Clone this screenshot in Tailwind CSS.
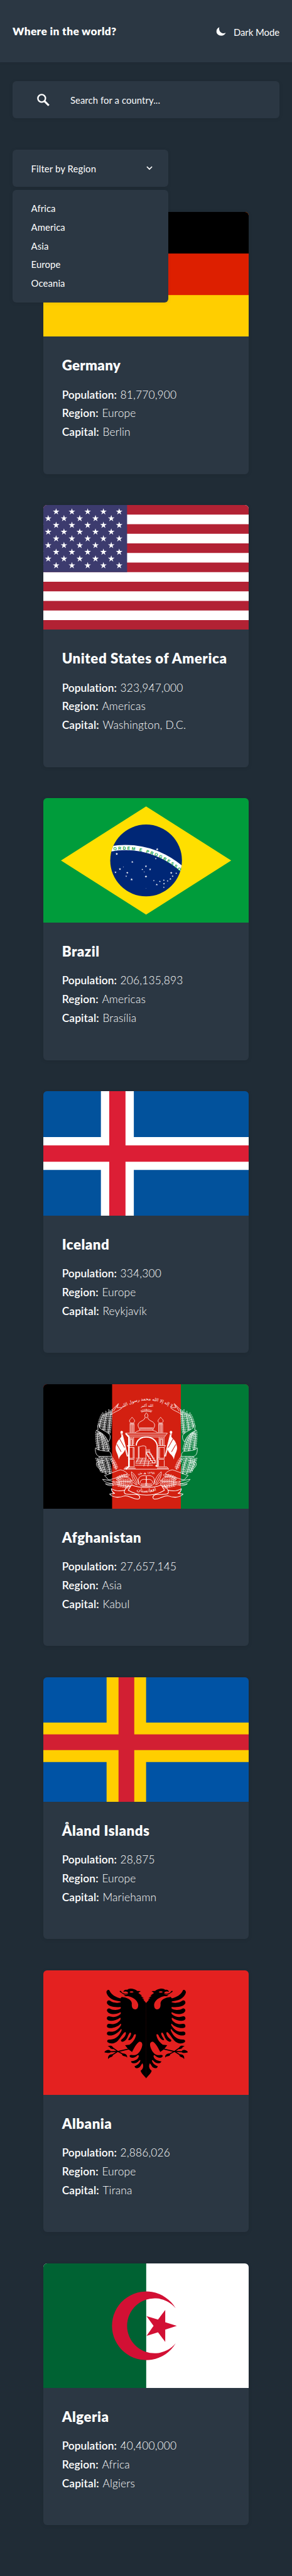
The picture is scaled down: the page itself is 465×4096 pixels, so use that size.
<!DOCTYPE html>
<html lang="en">
<head>
<meta charset="utf-8">
<title>Where in the world?</title>
<script src="https://cdn.jsdelivr.net/npm/@tailwindcss/browser@4"></script>
</head>
<body class="bg-[#202c36] font-['Lato','Open_Sans',sans-serif] text-white">
<div class="flex h-[4096px] w-[465px] flex-col overflow-hidden">

<header class="flex h-[99.1px] shrink-0 items-center justify-between bg-[#2b3743] px-[20px] shadow-[0_1px_5px_rgba(0,0,0,0.06)]">
  <h1 class="text-[17.35px] leading-[24px] font-extrabold tracking-[0.36px]">Where in the world?</h1>
  <div class="flex items-center gap-[12px] pt-[2px]">
    <svg class="mt-[-2px] h-[14px] w-[16px]" viewBox="0 0 26 23"><path d="M8.5 0.5C3.5 2.500 1 6.500 1 11.500C1 18 6.500 22.500 13.500 22.500C19 22.500 23.500 19.800 25.200 14.800C23 16.200 20.500 16.800 17.500 16.300C11 15.300 6.500 8.500 8.500 0.500Z" fill="#fff"/></svg>
    <span class="text-[14.87px] leading-[20px] tracking-[-0.04px]">Dark Mode</span>
  </div>
</header>

<main class="flex flex-col px-[19.8px] pt-[29.8px]">
  <div class="flex h-[59.5px] items-center rounded-[6px] bg-[#2b3743] pl-[39.7px] shadow-[0_1px_6px_rgba(0,0,0,0.08)]">
    <svg class="h-[20px] w-[20px]" viewBox="0 0 32 32" fill="none" stroke="#fff"><circle cx="11.800" cy="11.800" r="9.600" stroke-width="3.800"/><path d="M19 19L30 30" stroke-width="5"/></svg>
    <span class="ml-[32.400px] text-[14.87px] leading-[20px] tracking-[0.08px] text-gray-50">Search for a country...</span>
  </div>

  <div class="relative mt-[49.600px] w-[247.900px]">
    <div class="flex h-[59.5px] items-center justify-between rounded-[6px] bg-[#2b3743] pr-[25px] pl-[29.800px] shadow-[0_1px_6px_rgba(0,0,0,0.08)]">
      <span class="text-[14.87px] leading-[20px] tracking-[0.13px]">Filter by Region</span>
      <svg class="h-[7px] w-[10px]" viewBox="0 0 16 11" fill="none" stroke="#fff" stroke-width="2.800"><path d="M1.500 1.500L8 8L14.500 1.500"/></svg>
    </div>
    <ul class="absolute top-[64.400px] left-0 z-10 h-[178.500px] w-full rounded-[6px] bg-[#2b3743] py-[14.800px] pl-[29.800px] text-[14.87px] leading-[29.750px] tracking-[0.1px] shadow-[0_1px_6px_rgba(0,0,0,0.08)]">
      <li>Africa</li><li>America</li><li>Asia</li><li>Europe</li><li>Oceania</li>
    </ul>
  </div>

  <div class="mx-auto mt-[39.700px] flex w-[327.300px] flex-col gap-[49.580px]">

    <article class="h-[416.400px] overflow-hidden rounded-[6px] bg-[#2b3743] shadow-[0_1px_6px_rgba(0,0,0,0.09)]">
      <svg class="block h-[198.300px] w-full" viewBox="0 0 528 320" preserveAspectRatio="none">
        <rect width="528" height="320" fill="#ffce00"/><rect width="528" height="213.300" fill="#dd1f00"/><rect width="528" height="106.700" fill="#000"/>
      </svg>
      <div class="px-[29.800px] pt-[29.700px]">
        <h2 class="text-[22.300px] leading-[32px] font-extrabold tracking-[0.3px]">Germany</h2>
        <dl class="mt-[15.400px] text-[17.35px] leading-[29.750px] font-light tracking-[0.17px]">
          <div class="flex gap-[5.600px]"><dt class="font-semibold tracking-[0.02px]">Population:</dt><dd>81,770,900</dd></div>
          <div class="flex gap-[5.600px]"><dt class="font-semibold tracking-[0.15px]">Region:</dt><dd>Europe</dd></div>
          <div class="flex gap-[5.600px]"><dt class="font-semibold tracking-[0.15px]">Capital:</dt><dd>Berlin</dd></div>
        </dl>
      </div>
    </article>

    <article class="h-[416.400px] overflow-hidden rounded-[6px] bg-[#2b3743] shadow-[0_1px_6px_rgba(0,0,0,0.09)]">
      <svg class="block h-[198.300px] w-full" viewBox="0 0 528 320" preserveAspectRatio="none">
        <defs><path id="star" d="M0-1L.2245-.309L.951-.309L.3633.118L.5878.809L0 .382L-.5878.809L-.3633.118L-.951-.309L-.2245-.309Z"/></defs>
        <rect width="528" height="320" fill="#fff"/>
        <path fill="#b22234" d="M0 0h528v24.600H0zM0 49.200h528v24.600H0zM0 98.500h528v24.600H0zM0 147.700h528v24.600H0zM0 196.900h528v24.600H0zM0 246.200h528v24.600H0zM0 295.400h528V320H0z"/>
        <rect width="215.200" height="172.300" fill="#3c3b6e"/>
        <g id="us-stars" fill="#fff"></g>
      </svg>
      <div class="px-[29.800px] pt-[29.700px]">
        <h2 class="text-[22.300px] leading-[32px] font-extrabold tracking-[0.57px] whitespace-nowrap">United States of America</h2>
        <dl class="mt-[15.400px] text-[17.35px] leading-[29.750px] font-light tracking-[0.17px]">
          <div class="flex gap-[5.600px]"><dt class="font-semibold tracking-[0.02px]">Population:</dt><dd>323,947,000</dd></div>
          <div class="flex gap-[5.600px]"><dt class="font-semibold tracking-[0.15px]">Region:</dt><dd>Americas</dd></div>
          <div class="flex gap-[5.600px]"><dt class="font-semibold tracking-[0.15px]">Capital:</dt><dd>Washington, D.C.</dd></div>
        </dl>
      </div>
    </article>

    <article class="h-[416.400px] overflow-hidden rounded-[6px] bg-[#2b3743] shadow-[0_1px_6px_rgba(0,0,0,0.09)]">
      <svg class="block h-[198.300px] w-full" viewBox="0 0 528 320" preserveAspectRatio="none">
        <defs><clipPath id="globe"><circle cx="264" cy="160" r="92.100"/></clipPath><path id="motto" d="M180.200 133.800A212.500 212.500 0 0 1 370 209"/></defs>
        <rect width="528" height="320" fill="#009c3b"/>
        <path d="M45.400 160L264 21.400L482.600 160L264 299Z" fill="#ffdf00"/>
        <circle cx="264" cy="160" r="92.100" fill="#002776"/>
        <circle cx="211.400" cy="344" r="217.100" fill="none" stroke="#fff" stroke-width="13.400" clip-path="url(#globe)"/>
        <text class="font-['Liberation_Sans',sans-serif] font-bold" font-size="11" fill="#009c3b"><textPath href="#motto" textLength="184">ORDEM E PROGRESSO</textPath></text>
        <g id="br-stars" fill="#fff"></g>
      </svg>
      <div class="px-[29.800px] pt-[29.700px]">
        <h2 class="text-[22.300px] leading-[32px] font-extrabold tracking-[0.5px]">Brazil</h2>
        <dl class="mt-[15.400px] text-[17.35px] leading-[29.750px] font-light tracking-[0.17px]">
          <div class="flex gap-[5.600px]"><dt class="font-semibold tracking-[0.02px]">Population:</dt><dd>206,135,893</dd></div>
          <div class="flex gap-[5.600px]"><dt class="font-semibold tracking-[0.15px]">Region:</dt><dd>Americas</dd></div>
          <div class="flex gap-[5.600px]"><dt class="font-semibold tracking-[0.15px]">Capital:</dt><dd>Brasília</dd></div>
        </dl>
      </div>
    </article>

    <article class="h-[416.400px] overflow-hidden rounded-[6px] bg-[#2b3743] shadow-[0_1px_6px_rgba(0,0,0,0.09)]">
      <svg class="block h-[198.300px] w-full" viewBox="0 0 528 320" preserveAspectRatio="none">
        <rect width="528" height="320" fill="#02529c"/>
        <path fill="#fff" d="M147.900 0h84.600v320h-84.600zM0 117.900h528v84.300H0z"/>
        <path fill="#dc1e35" d="M169.300 0h41.800v320h-41.800zM0 139.300h528v42H0z"/>
      </svg>
      <div class="px-[29.800px] pt-[29.700px]">
        <h2 class="text-[22.300px] leading-[32px] font-extrabold tracking-[0.5px]">Iceland</h2>
        <dl class="mt-[15.400px] text-[17.35px] leading-[29.750px] font-light tracking-[0.17px]">
          <div class="flex gap-[5.600px]"><dt class="font-semibold tracking-[0.02px]">Population:</dt><dd>334,300</dd></div>
          <div class="flex gap-[5.600px]"><dt class="font-semibold tracking-[0.15px]">Region:</dt><dd>Europe</dd></div>
          <div class="flex gap-[5.600px]"><dt class="font-semibold tracking-[0.15px]">Capital:</dt><dd>Reykjavík</dd></div>
        </dl>
      </div>
    </article>

    <article class="h-[416.400px] overflow-hidden rounded-[6px] bg-[#2b3743] shadow-[0_1px_6px_rgba(0,0,0,0.09)]">
      <svg class="block h-[198.300px] w-full" viewBox="0 0 528 320" preserveAspectRatio="none">
        <defs>
          <path id="grain" d="M0 0C4-9 16-12 28-7C22 2 10 6 0 0Z"/>
          <path id="creed" d="M136 262Q380 60 640 256"/>
          <path id="scroll" d="M238 830Q380 908 524 826"/>
          <g id="wreath" fill="none" stroke="#fff" stroke-width="4" stroke-linejoin="round">
            <g class="ears" stroke-width="3.200"></g>
            <path fill="currentColor" d="M768 392C730 402 692 430 674 480C655 460 655 430 666 420C692 395 722 390 742 370L748 345L756 352L752 388Z"/>
            <path fill="currentColor" d="M772 525C776 560 765 590 740 592L652 592C646 580 655 560 668 553C700 547 755 552 772 525Z"/>
            <path d="M700 625C740 618 772 635 764 658C758 680 732 688 736 704M712 640C740 634 756 644 750 660C742 678 724 684 728 700"/>
            <path d="M580 695C620 705 680 735 702 738L672 772C640 770 590 745 524 726C540 708 560 697 580 695Z"/>
            <path d="M636 786C660 776 690 772 718 768C704 788 680 796 640 802M640 802C660 808 680 806 696 802C680 816 650 820 632 812M612 782L618 816M622 780L630 816M632 778L640 812"/>
            <path d="M595 185L640 230L652 272C628 246 596 246 566 216L606 216ZM602 196L634 244"/>
            <path stroke-width="5" d="M548 852C590 862 626 854 650 840C648 858 638 870 624 876L663 882C640 908 590 912 550 896C520 886 480 926 440 920C424 912 430 890 452 886C500 880 545 892 550 870C553 850 530 826 514 812"/>
            <path d="M440 806C446 765 468 730 495 710C497 750 478 782 448 812M450 800L486 730M455 812C480 795 500 780 508 758"/>
            <path stroke-width="5" d="M568 408L522 592M576 410L528 592"/><circle cx="570" cy="405" r="8" fill="#fff"/>
            <path fill="#fff" stroke="none" d="M566 424C576 456 600 462 608 490C632 548 600 556 592 616C584 572 540 572 541 512Z"/>
            <path stroke="#d32011" stroke-width="5" d="M586 456L548 524M608 498L574 556"/>
            <path d="M380 256C395 272 398 288 380 294M392 292L394 302C404 320 444 322 444 352C444 366 434 374 430 390L380 390M380 380H430M380 372H432M430 392C450 396 462 404 468 410"/>
            <path stroke-width="3.500" d="M490 290C498 304 512 306 510 322C508 332 498 334 490 334M490 290C482 304 468 306 470 322C472 332 482 334 490 334M472 338H508M472 345H508M474 345V410M482 345V410M490 345V410M498 345V410M506 345V410"/>
            <path d="M380 413H542L530 428H380M528 432L520 442H380M516 444V508M478 444V500M486 508V452H506V508M490 508V460H502V508"/>
            <path d="M470 508H528L518 522H474M474 522V604M482 522V604M518 522V604M470 606H522M472 614H520M474 620V668M518 620V668M470 672H538L554 690H380M462 682H546"/>
            <path d="M380 820V745M380 742C412 734 450 744 440 792C438 806 425 818 410 822H380M380 772C402 762 432 772 428 798M388 796V820M398 798V820M408 798V820M418 798V818"/>
            <path d="M384 240V226M392 240L396 228M400 242L408 230M408 246L418 234M414 250L425 240M380 244C395 244 405 246 416 250"/>
          </g>
        </defs>
        <rect width="528" height="320" fill="#d32011"/><rect width="176.700" height="320" fill="#000"/><rect x="353.300" width="175" height="320" fill="#007a36"/>
        <g transform="translate(138 -12) scale(.33333)">
          <use href="#wreath" class="text-[#007a36]"/>
          <use href="#wreath" class="text-black" transform="translate(760 0) scale(-1 1)"/>
          <g fill="none" stroke="#fff" stroke-width="4">
            <path stroke-width="9" d="M302 508C306 420 450 420 464 508M464 508V668L450 662"/>
            <path stroke-width="12" d="M222 416L246 442V668L222 690"/>
            <path d="M318 604V516C335 522 350 500 376 516V604M324 604V520M300 606H384M300 620L400 620M298 632H410M296 645H420M294 660H430M320 606L300 640M350 606L330 650M375 606L360 668M400 625L392 668"/>
            <path stroke-width="6" fill="#d32011" d="M380 560H408V574H418V588H428V604H438V622H448V642H425V624H412V606H400V588H388V574H380Z"/>
            <path d="M384 558V536M394 558V536M404 558V536"/>
            <path stroke-width="5" fill="#d32011" d="M266 812C330 838 430 838 494 812L520 852C440 902 320 902 240 852Z"/>
          </g>
          <g class="font-['DejaVu_Sans','Noto_Sans',sans-serif]" fill="#fff" text-anchor="middle" direction="rtl">
            <text font-size="33"><textPath href="#creed" startOffset="50%">لا إله إلا الله محمد رسول الله</textPath></text>
            <text x="386" y="212" font-size="28">الله أكبر</text>
            <text x="380" y="728" font-size="27">١٢٩٨ هـ ش</text>
            <text font-size="38"><textPath href="#scroll" startOffset="50%">افغانستان</textPath></text>
          </g>
        </g>
      </svg>
      <div class="px-[29.800px] pt-[29.700px]">
        <h2 class="text-[22.300px] leading-[32px] font-extrabold tracking-[0.5px]">Afghanistan</h2>
        <dl class="mt-[15.400px] text-[17.35px] leading-[29.750px] font-light tracking-[0.17px]">
          <div class="flex gap-[5.600px]"><dt class="font-semibold tracking-[0.02px]">Population:</dt><dd>27,657,145</dd></div>
          <div class="flex gap-[5.600px]"><dt class="font-semibold tracking-[0.15px]">Region:</dt><dd>Asia</dd></div>
          <div class="flex gap-[5.600px]"><dt class="font-semibold tracking-[0.15px]">Capital:</dt><dd>Kabul</dd></div>
        </dl>
      </div>
    </article>

    <article class="h-[416.400px] overflow-hidden rounded-[6px] bg-[#2b3743] shadow-[0_1px_6px_rgba(0,0,0,0.09)]">
      <svg class="block h-[198.300px] w-full" viewBox="0 0 528 320" preserveAspectRatio="none">
        <rect width="528" height="320" fill="#0053a5"/>
        <path fill="#ffce00" d="M162.500 0h101.500v320h-101.500zM0 116h528v101.300H0z"/>
        <path fill="#d21f33" d="M193.200 0h40.400v320h-40.400zM0 146.400h528v40.300H0z"/>
      </svg>
      <div class="px-[29.800px] pt-[29.700px]">
        <h2 class="text-[22.300px] leading-[32px] font-extrabold tracking-[0.5px]">Åland Islands</h2>
        <dl class="mt-[15.400px] text-[17.35px] leading-[29.750px] font-light tracking-[0.17px]">
          <div class="flex gap-[5.600px]"><dt class="font-semibold tracking-[0.02px]">Population:</dt><dd>28,875</dd></div>
          <div class="flex gap-[5.600px]"><dt class="font-semibold tracking-[0.15px]">Region:</dt><dd>Europe</dd></div>
          <div class="flex gap-[5.600px]"><dt class="font-semibold tracking-[0.15px]">Capital:</dt><dd>Mariehamn</dd></div>
        </dl>
      </div>
    </article>

    <article class="h-[416.400px] overflow-hidden rounded-[6px] bg-[#2b3743] shadow-[0_1px_6px_rgba(0,0,0,0.09)]">
      <svg class="block h-[198.300px] w-full" viewBox="0 0 528 320" preserveAspectRatio="none">
        <defs>
          <g id="eagle">
            <path d="M379 240L356 213L364 212L345 200L360 200L335 184L347 183L318 162L337 148L310 146C290 130 260 125 240 132L232 138C215 135 205 142 203 155C212 148 225 150 236 155L240 166C220 170 200 168 190 155C185 143 175 142 174 150C178 158 190 160 198 168C210 178 225 172 242 173L207 180C215 188 228 187 240 187C275 195 310 215 317 250C318 275 310 288 293 288C270 286 266 265 268 240C262 210 230 198 190 193L180 203C145 195 110 175 97 145C90 133 75 138 72 155C75 185 110 215 150 222L176 226C186 229 184 233 177 235C150 243 115 235 100 222C85 215 75 225 76 240C85 265 130 275 180 270C186 274 184 281 178 285C150 298 115 292 100 283C85 277 74 288 77 300C85 325 140 335 180 310C186 312 184 322 178 327C150 350 120 350 98 343C82 338 74 350 76 362C85 385 140 380 178 352C184 354 182 364 178 372C150 405 120 405 95 400C80 398 74 410 77 422C85 440 150 435 182 398C188 400 186 410 180 418C155 455 125 465 95 459C78 458 74 470 77 480C90 500 150 490 186 438C192 442 190 455 180 468C160 504 130 522 95 520C78 520 76 530 80 540C110 560 140 550 160 530C185 505 200 470 218 463C226 468 222 482 216 492C205 512 185 520 184 530C195 545 215 535 228 515C238 500 240 480 252 468C264 466 264 476 260 486C255 502 244 510 240 524C255 530 270 515 280 495C285 480 292 476 300 482C298 510 280 540 250 560L216 564L232 585L248 600L270 616C285 590 300 555 325 538C350 535 352 560 345 580C335 610 322 625 305 636C285 648 260 630 250 645C255 668 290 665 312 642C320 638 324 645 320 655C310 680 285 685 262 688C262 704 285 708 306 698C320 692 324 676 334 680C332 700 312 718 290 725C288 735 300 745 315 740C335 735 340 710 350 703C360 720 358 748 336 760C340 780 360 795 379 819Z"/>
            <path fill="none" stroke="#000" stroke-width="8" d="M244 593L165 612L62 616M160 612L112 578M160 612L92 655M160 612L228 648"/>
            <path d="M82 572C95 566 110 566 118 574C124 582 130 590 126 594C112 596 98 588 96 578ZM56 618C66 604 84 596 100 604C108 612 108 618 98 622C84 626 72 620 56 618ZM86 672C82 650 90 636 112 634C124 634 124 644 118 650C108 658 92 656 86 672ZM232 660C234 640 222 628 200 628C190 630 190 638 198 644C210 652 224 646 232 660Z"/>
            <path fill="#e42120" d="M250 154C258 147 274 147 282 155C274 162 258 162 250 154Z"/>
          </g>
        </defs>
        <rect width="528" height="320" fill="#e42120"/>
        <g transform="translate(138 4) scale(.33333)"><use href="#eagle"/><use href="#eagle" transform="translate(757 0) scale(-1 1)"/></g>
      </svg>
      <div class="px-[29.800px] pt-[29.700px]">
        <h2 class="text-[22.300px] leading-[32px] font-extrabold tracking-[0.5px]">Albania</h2>
        <dl class="mt-[15.400px] text-[17.35px] leading-[29.750px] font-light tracking-[0.17px]">
          <div class="flex gap-[5.600px]"><dt class="font-semibold tracking-[0.02px]">Population:</dt><dd>2,886,026</dd></div>
          <div class="flex gap-[5.600px]"><dt class="font-semibold tracking-[0.15px]">Region:</dt><dd>Europe</dd></div>
          <div class="flex gap-[5.600px]"><dt class="font-semibold tracking-[0.15px]">Capital:</dt><dd>Tirana</dd></div>
        </dl>
      </div>
    </article>

    <article class="h-[416.400px] overflow-hidden rounded-[6px] bg-[#2b3743] shadow-[0_1px_6px_rgba(0,0,0,0.09)]">
      <svg class="block h-[198.300px] w-full" viewBox="0 0 528 320" preserveAspectRatio="none">
        <rect width="528" height="320" fill="#fff"/><rect width="264.300" height="320" fill="#006233"/>
        <path fill="#d21034" d="M340 115A88 88 0 1 0 340 205A70.500 70.500 0 1 1 340 115ZM342.900 160.300L313.200 150.800V119.300L294.600 144L265 135.300L283.200 160.300L265 186L294.600 176.700L313.200 201.400V170Z"/>
      </svg>
      <div class="px-[29.800px] pt-[29.700px]">
        <h2 class="text-[22.300px] leading-[32px] font-extrabold tracking-[0.5px]">Algeria</h2>
        <dl class="mt-[15.400px] text-[17.35px] leading-[29.750px] font-light tracking-[0.17px]">
          <div class="flex gap-[5.600px]"><dt class="font-semibold tracking-[0.02px]">Population:</dt><dd>40,400,000</dd></div>
          <div class="flex gap-[5.600px]"><dt class="font-semibold tracking-[0.15px]">Region:</dt><dd>Africa</dd></div>
          <div class="flex gap-[5.600px]"><dt class="font-semibold tracking-[0.15px]">Capital:</dt><dd>Algiers</dd></div>
        </dl>
      </div>
    </article>

  </div>
</main>
</div>

<script>
const NS = 'http://www.w3.org/2000/svg';
function put(parent, href, transform) {
  const u = document.createElementNS(NS, 'use');
  u.setAttribute('href', href);
  u.setAttribute('transform', transform);
  parent.appendChild(u);
}

// Nine staggered rows of stars in the canton
const us = document.getElementById('us-stars');
for (let r = 0; r < 9; r++) {
  for (let c = r % 2 ? 0 : -1; c < 5; c++) {
    const x = (r % 2 ? 12.5 : 32.9) + c * 40.5;
    put(us, '#star', `translate(${x} ${17.2 + r * 17.25}) scale(8.9)`);
  }
}

// Southern sky: x, y, radius
const sky = [[292.5,131.3,3.6],[188.6,143.3,3.6],[228.6,163.8,3.1],[288.9,155.4,2.4],[196.8,182.1,3.4],[205.7,176.8,1.3],[185.4,190.6,3],[215.7,191.5,3],[212.9,200.4,2.4],[226.8,208.9,3.5],[263.6,175,3],[254.3,183,2.4],[274.3,183,3],[259.3,189.3,1.4],[263.6,201.3,3.5],[283.9,211.6,2.2],[291.4,221.9,3],[299.3,213.8,2.4],[309.6,210.7,2.4],[310,219.6,2.7],[309.6,229,2.2],[319.3,212.5,2.4],[326.4,207.6,2.8],[332.1,200.4,2.8],[328.6,192,3.4],[341.4,192.9,2.4],[263.6,231.7,1]];
const br = document.getElementById('br-stars');
for (const [x, y, r] of sky) put(br, '#star', `translate(${x} ${y}) scale(${r})`);

// Wheat ears: pairs of grains set along each stalk
const stalks = [
  'M672 420C664 350 658 300 658 250', 'M708 400C704 340 696 290 682 255', 'M742 375C738 325 725 290 708 268',
  'M672 548C684 500 694 460 722 420', 'M706 548C712 500 722 460 738 410', 'M746 540C752 500 758 460 757 415',
  'M612 690C622 650 640 625 650 610', 'M660 725C664 690 674 640 690 606', 'M690 725C700 690 716 650 724 606', 'M716 715C726 690 746 650 756 606',
  'M610 770C580 748 556 742 530 745', 'M608 790C570 782 540 782 505 786', 'M608 806C570 812 540 822 500 824'
];
const ears = document.querySelector('#wreath .ears');
for (const d of stalks) {
  const p = document.createElementNS(NS, 'path');
  p.setAttribute('d', d);
  ears.appendChild(p);
  const len = p.getTotalLength();
  for (let s = 0; s <= len; s += 17) {
    const a = p.getPointAtLength(s), b = p.getPointAtLength(Math.max(0, s - 1)), c = p.getPointAtLength(Math.min(len, s + 1));
    const deg = Math.atan2(c.y - b.y, c.x - b.x) * 180 / Math.PI;
    put(ears, '#grain', `translate(${a.x} ${a.y}) rotate(${deg - 22}) scale(.85)`);
    put(ears, '#grain', `translate(${a.x} ${a.y}) rotate(${deg + 22}) scale(.85 -.85)`);
  }
}
</script>
</body>
</html>
